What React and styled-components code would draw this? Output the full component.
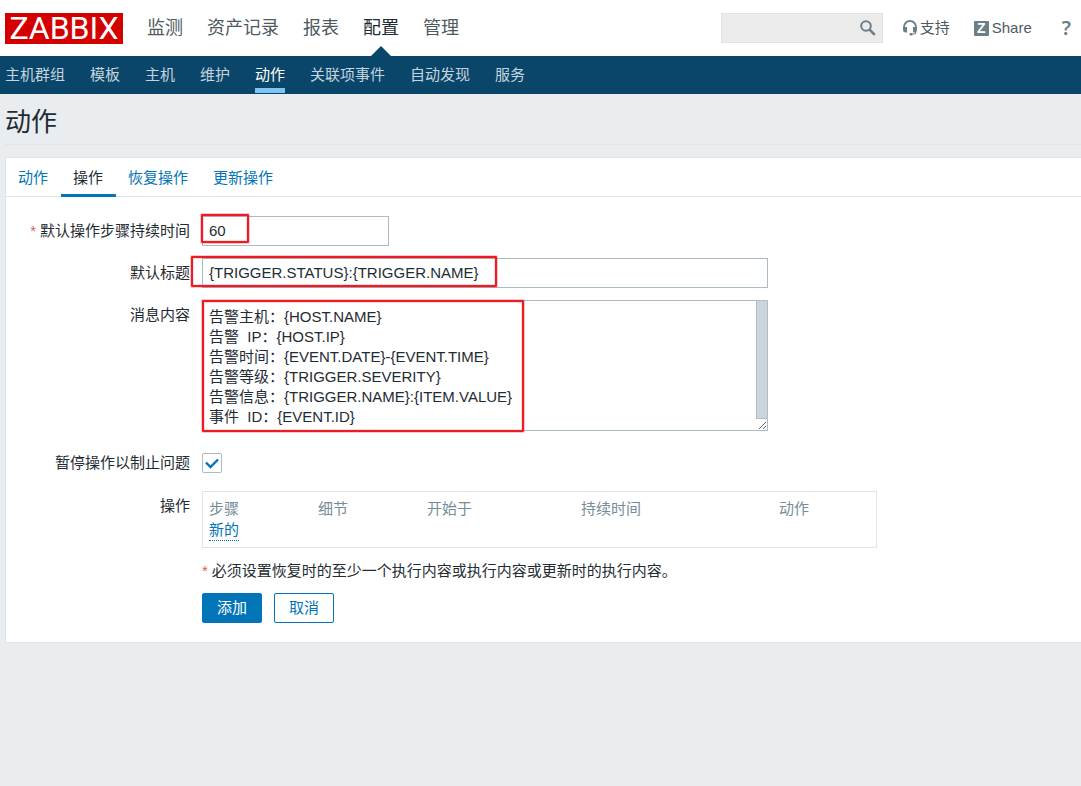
import React, { useState } from "react";
import styled, { createGlobalStyle, css } from "styled-components";

const colorBlue = `#0275b8`;
const colorNavy = `#0a466a`;
const colorText = `#1f2c33`;
const colorGrey = `#768d99`;
const colorIcon = `#6c7f89`;
const colorBorder = `#dfe4e7`;
const colorInput = `#acbbc2`;
const colorMark = `#ed1c24`;

const GlobalStyle = createGlobalStyle`
  * {
    box-sizing: border-box;
  }
  html {
    min-height: 100%;
    background: #e9edf0;
  }
  body {
    margin: 0;
    color: ${colorText};
    font-family: "Liberation Sans", "Noto Sans CJK SC", sans-serif;
    font-size: 15px;
    line-height: 20px;
    overflow-x: hidden;
  }
  input, textarea, button {
    font: inherit;
    color: inherit;
  }
  a {
    text-decoration: none;
  }
`

const mainMenu = ["监测", "资产记录", "报表", "配置", "管理"];
const subMenu = ["主机群组", "模板", "主机", "维护", "动作", "关联项事件", "自动发现", "服务"];
const tabs = ["动作", "操作", "恢复操作", "更新操作"];
const columns = [
  { title: "步骤", width: 109 },
  { title: "细节", width: 109 },
  { title: "开始于", width: 154 },
  { title: "持续时间", width: 198 },
  { title: "动作", width: 103 },
];

const defaultMessage = `告警主机：{HOST.NAME}
告警  IP：{HOST.IP}
告警时间：{EVENT.DATE}-{EVENT.TIME}
告警等级：{TRIGGER.SEVERITY}
告警信息：{TRIGGER.NAME}:{ITEM.VALUE}
事件  ID：{EVENT.ID}`;

function SearchIcon() {
  return (
    <svg width="16" height="16" viewBox="0 0 16 16" fill="none" stroke={colorIcon} aria-hidden="true">
      <circle cx="6" cy="6" r="4.8" strokeWidth="2" />
      <path d="M9.6 9.6L14.8 14.8" strokeWidth="2.6" />
    </svg>
  )
}

function HeadsetIcon() {
  return (
    <svg width="14" height="16" viewBox="0 0 14 16" fill={colorIcon} aria-hidden="true">
      <path d="M1 8V7a6 6 0 0 1 12 0v1" fill="none" stroke={colorIcon} strokeWidth="1.8" />
      <path d="M0 7h4v5.500H2.400A2.400 2.400 0 0 1 0 10.100z" />
      <path d="M10 7h4v3.100A2.400 2.400 0 0 1 11.600 12.500H10z" />
      <path d="M12.800 10.500v1.700a1.800 1.800 0 0 1-1.800 1.800H9" fill="none" stroke={colorIcon} strokeWidth="1.200" />
      <rect x="6.500" y="13" width="3" height="2.400" rx="1" />
    </svg>
  )
}

function Header() {
  return (
    <TopBar>
      <Logo href="#">ZABBIX</Logo>
      <MainNav>
        {mainMenu.map(item => (
          <MainLink key={item} href="#" $active={item === "配置"}>{item}</MainLink>
        ))}
      </MainNav>
      <Search role="search">
        <SearchInput type="text" aria-label="搜索" />
        <SearchButton type="submit" aria-label="搜索"><SearchIcon /></SearchButton>
      </Search>
      <ToolLink href="#"><HeadsetIcon />支持</ToolLink>
      <ToolLink href="#"><ShareBadge>Z</ShareBadge>Share</ToolLink>
      <HelpLink href="#">?</HelpLink>
    </TopBar>
  )
}

function Operations() {
  return (
    <OperationsBox>
      <OperationsTable>
        <colgroup>
          {columns.map(column => <col key={column.title} width={column.width} />)}
        </colgroup>
        <thead>
          <tr>
            {columns.map(column => <th key={column.title} scope="col">{column.title}</th>)}
          </tr>
        </thead>
        <tbody>
          <tr>
            <td colSpan={columns.length}><NewButton type="button">新的</NewButton></td>
          </tr>
        </tbody>
      </OperationsTable>
    </OperationsBox>
  )
}

function App() {
  const [duration, setDuration] = useState("60");
  const [subject, setSubject] = useState("{TRIGGER.STATUS}:{TRIGGER.NAME}");
  const [message, setMessage] = useState(defaultMessage);
  const [paused, setPaused] = useState(true);

  return (
    <>
      <GlobalStyle />
      <Header />
      <SubNav>
        {subMenu.map(item => (
          <SubLink key={item} href="#" $active={item === "动作"}>{item}</SubLink>
        ))}
      </SubNav>
      <Main>
        <PageTitle>动作</PageTitle>
        <Panel>
          <Tabs>
            {tabs.map(item => (
              <Tab key={item} href="#" $active={item === "操作"}>{item}</Tab>
            ))}
          </Tabs>
          <Form onSubmit={(e) => e.preventDefault()}>
            <Label htmlFor="duration"><Required>*</Required>默认操作步骤持续时间</Label>
            <Field $width={187}>
              <TextInput id="duration" value={duration} onChange={(e) => setDuration(e.target.value)} />
              <Mark $top={-2} $left={-1} $width={48} $height={29} />
            </Field>

            <Label htmlFor="subject">默认标题</Label>
            <Field $width={566}>
              <TextInput id="subject" value={subject} onChange={(e) => setSubject(e.target.value)} />
              <Mark $top={-2} $left={-11} $width={306} $height={31} />
            </Field>

            <Label htmlFor="message">消息内容</Label>
            <Field $width={566}>
              <MessageArea id="message" value={message} onChange={(e) => setMessage(e.target.value)} />
              <ScrollThumb />
              <Mark $top={0} $left={0} $width={322} $height={132} />
            </Field>

            <CheckLabel htmlFor="paused">暂停操作以制止问题</CheckLabel>
            <CheckField>
              <Checkbox id="paused" type="checkbox" checked={paused} onChange={(e) => setPaused(e.target.checked)} />
              {paused &&
                <CheckMark viewBox="0 0 20 20" aria-hidden="true">
                  <path d="M4 9.500L8.500 14L16 6.500" fill="none" stroke={colorBlue} strokeWidth="2.400" />
                </CheckMark>
              }
            </CheckField>

            <Label as="span">操作</Label>
            <Operations />

            <Footer>
              <Note><Required>*</Required>必须设置恢复时的至少一个执行内容或执行内容或更新时的执行内容。</Note>
              <Buttons>
                <Button type="submit" $primary>添加</Button>
                <Button type="button">取消</Button>
              </Buttons>
            </Footer>
          </Form>
        </Panel>
      </Main>
    </>
  );
}

export default App;

const TopBar = styled.header`
  display: flex;
  align-items: center;
  height: 56px;
  padding: 0 10px 0 5px;
  background: #fff;
`
const Logo = styled.a`
  width: 118px;
  height: 31px;
  margin-right: 24px;
  background: #d40000;
  color: #fff;
  font-family: Roboto, sans-serif;
  font-size: 32px;
  line-height: 31px;
  text-align: center;
`
const MainNav = styled.nav`
  display: flex;
  align-self: stretch;
  gap: 24px;
  margin-right: auto;
`
const MainLink = styled.a`
  position: relative;
  color: ${props => props.$active ? colorText : "#4d5a61"};
  font-size: 18px;
  line-height: 56px;
  white-space: nowrap;

  ${props => props.$active && css`
    &::after {
      content: "";
      position: absolute;
      bottom: 0;
      left: 50%;
      margin-left: -10px;
      border: 10px solid transparent;
      border-top-width: 0;
      border-bottom-color: ${colorNavy};
    }
  `}
`
const Search = styled.form`
  display: flex;
  align-items: center;
  width: 162px;
  height: 30px;
  border: 1px solid #e3e3e3;
  background: #ebebeb;
`
const SearchInput = styled.input`
  flex: 1;
  min-width: 0;
  border: 0;
  padding: 0 6px;
  background: none;
`
const SearchButton = styled.button`
  display: flex;
  padding: 0 6px;
  border: 0;
  background: none;
`
const ToolLink = styled.a`
  display: flex;
  align-items: center;
  gap: 3px;
  margin-left: 20px;
  color: #4d5a61;
  white-space: nowrap;

  & + & {
    margin-left: 24px;
  }
`
const ShareBadge = styled.span`
  width: 15px;
  height: 15px;
  border-radius: 1px;
  background: ${colorIcon};
  color: #fff;
  font-size: 14px;
  font-weight: bold;
  line-height: 15px;
  text-align: center;
`
const HelpLink = styled.a`
  margin-left: 30px;
  color: ${colorIcon};
  font-family: "Noto Sans", sans-serif;
  font-size: 20px;
  font-weight: 600;
`

const SubNav = styled.nav`
  display: flex;
  gap: 25px;
  height: 38px;
  padding: 0 5px 1px;
  background: ${colorNavy};
`
const SubLink = styled.a`
  border-bottom: 5px solid ${props => props.$active ? "#7fc4f2" : "transparent"};
  color: ${props => props.$active ? "#fff" : "#c5d5df"};
  line-height: 37px;
  white-space: nowrap;
`

const Main = styled.main`
  padding-left: 5px;
`
const PageTitle = styled.h1`
  margin: 0 0 12px;
  padding-top: 6px;
  border-bottom: 1px solid ${colorBorder};
  font-size: 26px;
  font-weight: normal;
  line-height: 44px;
`
const Panel = styled.section`
  border: 1px solid ${colorBorder};
  border-right: 0;
  background: #fff;
`
const Tabs = styled.nav`
  display: flex;
  height: 39px;
  border-bottom: 1px solid ${colorBorder};
`
const Tab = styled.a`
  height: 39px;
  padding: 0 13px 0 12px;
  border-bottom: 3px solid ${props => props.$active ? colorBlue : "transparent"};
  color: ${props => props.$active ? colorText : colorBlue};
  line-height: 40px;
`

const Form = styled.form`
  display: grid;
  grid-template-columns: 184px minmax(0, 1fr);
  column-gap: 12px;
  row-gap: 12px;
  padding: 19px 0;
`
const Label = styled.label`
  justify-self: end;
  line-height: 30px;
  white-space: nowrap;
`
const CheckLabel = styled(Label)`
  padding: 10px 0 6px;
  line-height: 20px;
`
const Required = styled.span`
  margin-right: 4px;
  color: #e45959;
`
const Field = styled.div`
  position: relative;
  width: ${props => props.$width}px;
  max-width: 100%;
`
const TextInput = styled.input`
  display: block;
  width: 100%;
  height: 30px;
  padding: 0 6px 2px;
  border: 1px solid ${colorInput};
  background: #fff;
`
const MessageArea = styled.textarea`
  display: block;
  width: 100%;
  height: 131px;
  padding: 6px 18px 2px 6px;
  border: 1px solid ${colorInput};
  background: #fff;
  line-height: 20px;
  resize: vertical;
`
const ScrollThumb = styled.span`
  position: absolute;
  top: 0;
  right: 0;
  bottom: 12px;
  width: 12px;
  border: 1px solid #b0bfc7;
  background: #ccd5db;
  pointer-events: none;
`
/* red frame drawn over a field to point at its value */
const Mark = styled.span`
  position: absolute;
  top: ${props => props.$top}px;
  left: ${props => props.$left}px;
  width: ${props => props.$width}px;
  height: ${props => props.$height}px;
  border: 2px solid ${colorMark};
  border-radius: 1px;
  box-shadow: 0 0 0 1px rgba(237, 28, 36, 0.25), inset 0 0 0 1px rgba(237, 28, 36, 0.15);
  pointer-events: none;
`
const CheckField = styled.div`
  position: relative;
  padding: 10px 0 6px;
`
const Checkbox = styled.input`
  display: block;
  appearance: none;
  width: 20px;
  height: 20px;
  margin: 0;
  border: 1px solid ${colorInput};
  border-radius: 2px;
  background: #fff;
`
const CheckMark = styled.svg`
  position: absolute;
  top: 10px;
  left: 0;
  width: 20px;
  height: 20px;
  pointer-events: none;
`

const OperationsBox = styled.div`
  width: 675px;
  max-width: 100%;
  padding: 6px 0;
  border: 1px solid ${colorBorder};
`
const OperationsTable = styled.table`
  width: 100%;
  border-collapse: collapse;
  table-layout: fixed;

  th, td {
    padding: 0 6px;
    text-align: left;
    line-height: 22px;
  }
  th {
    color: ${colorGrey};
    font-weight: normal;
  }
`
const NewButton = styled.button`
  display: block;
  padding: 0;
  border: 0;
  border-bottom: 1px dotted ${colorBlue};
  background: none;
  color: ${colorBlue};
  line-height: 20px;
`
const Footer = styled.div`
  grid-column: 2;
`
const Note = styled.p`
  margin: 0 0 12px;
  line-height: 21px;
`
const Buttons = styled.div`
  display: flex;
  gap: 12px;
`
const Button = styled.button`
  width: 60px;
  height: 30px;
  padding: 0;
  border: 1px solid ${colorBlue};
  border-radius: 2px;
  background: ${props => props.$primary ? colorBlue : "#fff"};
  color: ${props => props.$primary ? "#fff" : colorBlue};
`
